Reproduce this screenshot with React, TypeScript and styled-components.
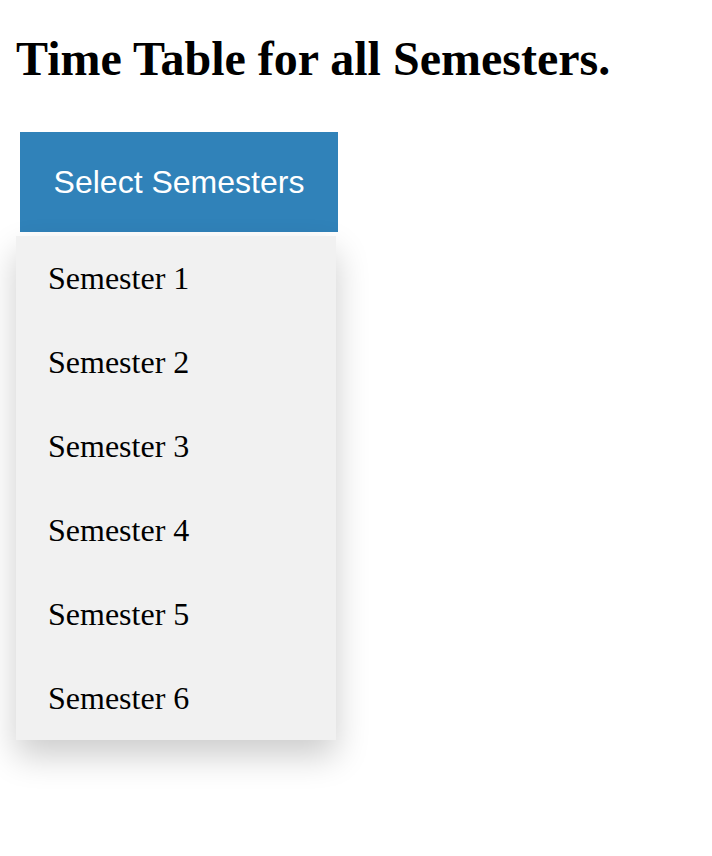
import React from "react";
import styled, { createGlobalStyle } from "styled-components";

const Global = createGlobalStyle`
  html, body { margin: 0; padding: 0; background: #ffffff; }
  body { font-family: "Liberation Serif", "Times New Roman", serif; color: #000; }
`;

const Page = styled.div`
  padding: 0 16px 116px;
`;

const Title = styled.h1`
  margin: 32px 0 0 0;
  font-family: "Liberation Serif", "Times New Roman", serif;
  font-size: 48px;
  font-weight: bold;
  line-height: 53px;
`;

const Dropdown = styled.div`
  margin-top: 47px;
  width: 320px;
  display: flex;
  flex-direction: column;
  gap: 4px;
`;

const DropButton = styled.button`
  display: block;
  margin-left: 4px;
  width: 318px;
  padding: 32px 0;
  border: none;
  background: #3082b9;
  color: #ffffff;
  font-family: "Liberation Sans", Arial, sans-serif;
  font-size: 32px;
  line-height: 36px;
  text-align: center;
  cursor: pointer;
`;

const Menu = styled.div`
  min-width: 320px;
  background: #f1f1f1;
  box-shadow: 0 16px 32px 0 rgba(0, 0, 0, 0.2);
  display: flex;
  flex-direction: column;
`;

const Item = styled.a`
  display: block;
  padding: 24px 32px;
  font-family: "Liberation Serif", "Times New Roman", serif;
  font-size: 32px;
  line-height: 36px;
  color: #000;
  text-decoration: none;
`;

const semesters = [1, 2, 3, 4, 5, 6];

export default function App() {
  return (
    <>
      <Global />
      <Page>
        <Title>Time Table for all Semesters.</Title>
        <Dropdown>
          <DropButton>Select Semesters</DropButton>
          <Menu>
            {semesters.map((n) => (
              <Item key={n} href="#">
                Semester {n}
              </Item>
            ))}
          </Menu>
        </Dropdown>
      </Page>
    </>
  );
}
